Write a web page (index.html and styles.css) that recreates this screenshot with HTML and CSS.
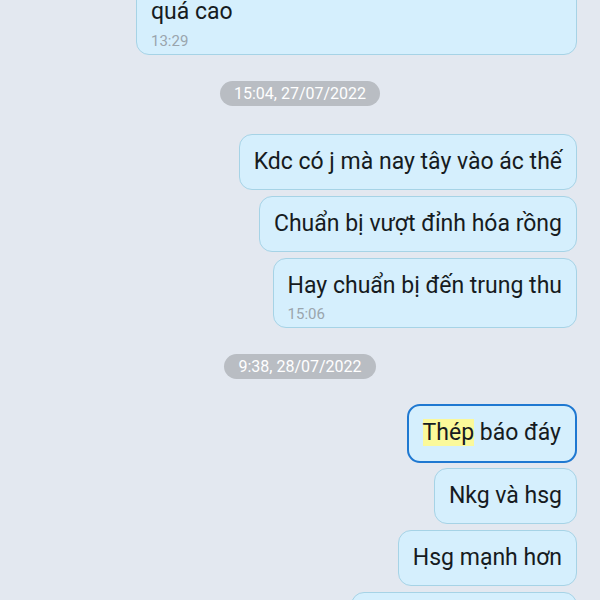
FILE: index.html
```html
<!DOCTYPE html>
<html lang="vi">
<head>
<meta charset="utf-8">
<link rel="stylesheet" href="styles.css">
</head>
<body>
<div class="chat">
  <div class="msg first">
    <div class="text">quá cao</div>
    <div class="time">13:29</div>
  </div>
  <div class="date">15:04, 27/07/2022</div>
  <div class="msg">
    <div class="text">Kdc có j mà nay tây vào ác thế</div>
  </div>
  <div class="msg">
    <div class="text">Chuẩn bị vượt đỉnh hóa rồng</div>
  </div>
  <div class="msg">
    <div class="text">Hay chuẩn bị đến trung thu</div>
    <div class="time">15:06</div>
  </div>
  <div class="date">9:38, 28/07/2022</div>
  <div class="msg selected">
    <div class="text"><span class="hl">Thép</span> báo đáy</div>
  </div>
  <div class="msg tight">
    <div class="text">Nkg và hsg</div>
  </div>
  <div class="msg">
    <div class="text">Hsg mạnh hơn</div>
  </div>
  <div class="msg last">
    <div class="text">Vì hsg nhiều sản phẩm</div>
  </div>
</div>
</body>
</html>
```

FILE: styles.css
```css
html, body {
  margin: 0;
  padding: 0;
  background: #e3e8f0;
  height: 600px;
  overflow: hidden;
}
.chat {
  display: flex;
  flex-direction: column;
  align-items: flex-end;
  padding-right: 23px;
  font-family: Roboto, "Noto Sans", sans-serif;
}
.msg {
  box-sizing: border-box;
  background: #d5effd;
  border: 1px solid #a6d3e6;
  border-radius: 13px;
  padding: 13px 14px;
  margin-top: 6px;
  color: #161b21;
}
.msg .text {
  font-size: 23px;
  line-height: 28px;
  white-space: nowrap;
}
.msg .time {
  font-size: 15px;
  line-height: 18px;
  color: #9aa5ad;
  margin-top: 5px;
}
.msg:has(.time) {
  padding-bottom: 4px;
}
.msg.first {
  width: 441px;
  margin-top: -16px;
}
.msg.first .time {
  margin-top: 6px;
}
.msg.selected {
  border: 2px solid #1f78d1;
  padding: 13px 14px 14px;
  margin-top: 25px;
}
.msg.tight {
  margin-top: 5px;
}
.msg.last {
  width: 226px;
}
.hl {
  background: #fbf99a;
}
.date {
  align-self: center;
  margin: 26px 0 0 23px;
  background: #b9bdc3;
  color: #ffffff;
  font-size: 16px;
  line-height: 25px;
  height: 25px;
  padding: 0 14px;
  border-radius: 13px;
}
.date + .msg {
  margin-top: 28px;
}
.date + .msg.selected {
  margin-top: 25px;
}
```
